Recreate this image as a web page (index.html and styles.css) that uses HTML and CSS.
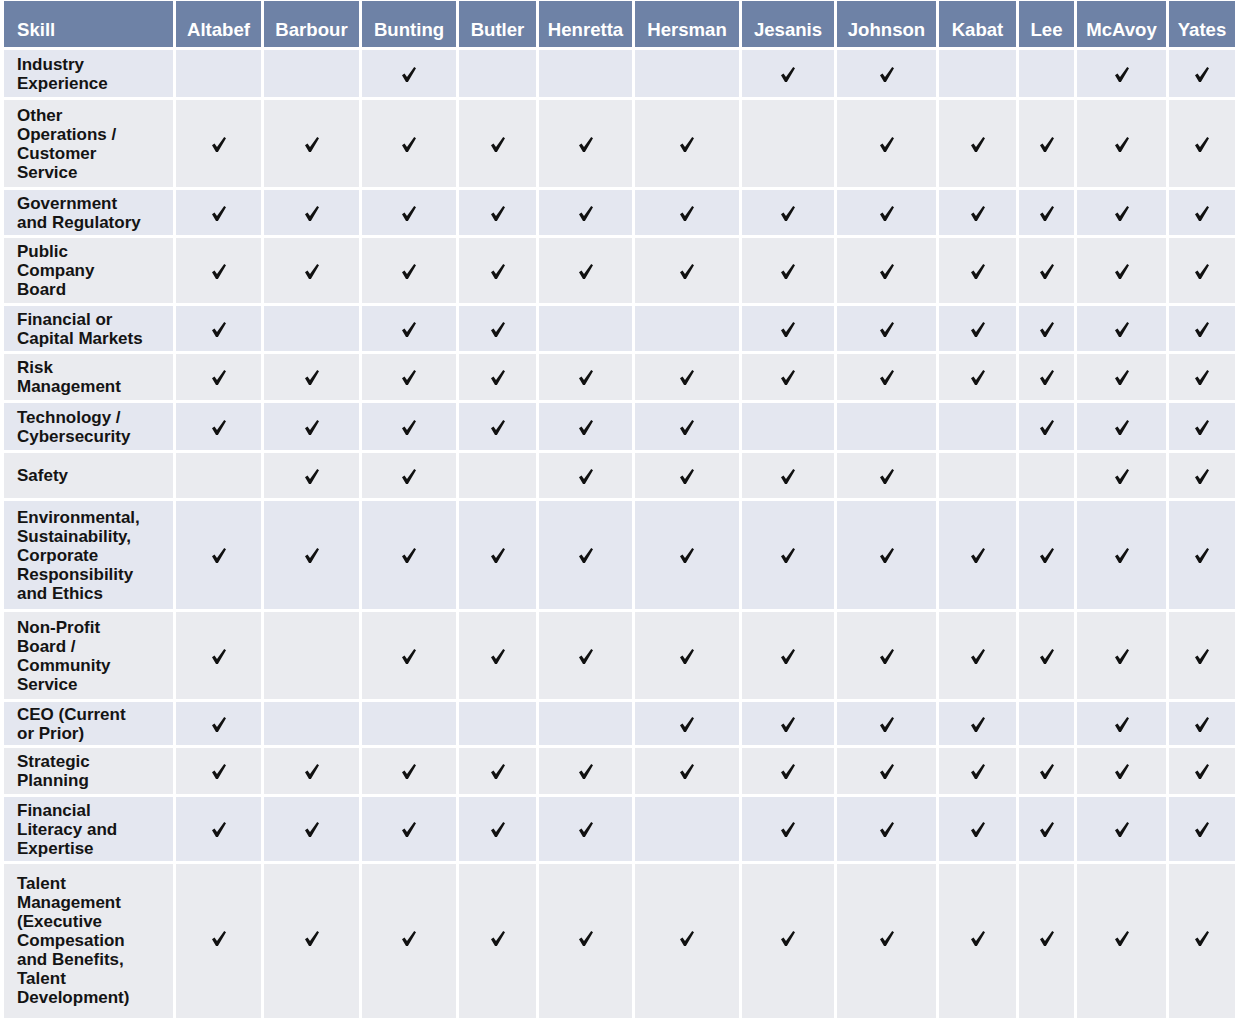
FILE: index.html
```html
<!DOCTYPE html>
<html lang="en">
<head>
<meta charset="utf-8">
<title>Director Skills Matrix</title>
<link rel="stylesheet" href="styles.css">
</head>
<body>
<svg class="defs" width="0" height="0" aria-hidden="true">
  <symbol id="ck" viewBox="0 0 14 15">
    <path d="M0 8.3 L2.5 6.6 L5 10.1 L12.2 0 L14 1.3 L5.9 15 L4 15 Z"/>
  </symbol>
</svg>
<table class="matrix">
  <colgroup>
    <col class="w-skill"><col class="w85"><col class="w95"><col class="w94"><col class="w77"><col class="w93"><col class="w104"><col class="w92"><col class="w99"><col class="w77"><col class="w55"><col class="w89"><col class="w66">
  </colgroup>
  <thead>
    <tr>
      <th class="hd hd-skill">Skill</th>
      <th class="hd">Altabef</th>
      <th class="hd">Barbour</th>
      <th class="hd">Bunting</th>
      <th class="hd">Butler</th>
      <th class="hd">Henretta</th>
      <th class="hd">Hersman</th>
      <th class="hd">Jesanis</th>
      <th class="hd">Johnson</th>
      <th class="hd">Kabat</th>
      <th class="hd">Lee</th>
      <th class="hd">McAvoy</th>
      <th class="hd">Yates</th>
    </tr>
  </thead>
  <tbody id="rows"></tbody>
</table>
<script src="app.js"></script>
</body>
</html>
```

FILE: app.js
```js
var data = [
  ["Industry<br>Experience", "p45", "001000110011"],
  ["Other<br>Operations /<br>Customer<br>Service", "p55", "111111011111"],
  ["Government<br>and Regulatory", "", "111111111111"],
  ["Public<br>Company<br>Board", "p40", "111111111111"],
  ["Financial or<br>Capital Markets", "", "101100111111"],
  ["Risk<br>Management", "p40", "111111111111"],
  ["Technology /<br>Cybersecurity", "p45", "111111000111"],
  ["Safety", "", "011011110011"],
  ["Environmental,<br>Sustainability,<br>Corporate<br>Responsibility<br>and Ethics", "p65", "111111111111"],
  ["Non-Profit<br>Board /<br>Community<br>Service", "p55", "101111111111"],
  ["CEO (Current<br>or Prior)", "p25", "100001111011"],
  ["Strategic<br>Planning", "p40", "111111111111"],
  ["Financial<br>Literacy and<br>Expertise", "", "111110111111"],
  ["Talent<br>Management<br>(Executive<br>Compesation<br>and Benefits,<br>Talent<br>Development)", "p-last", "111111111111"]
];
var tbody = document.getElementById("rows");
var html = "";
data.forEach(function (r) {
  html += '<tr class="' + r[1] + '"><th class="skill">' + r[0] + '</th>';
  for (var i = 0; i < r[2].length; i++) {
    html += '<td class="cell">' + (r[2][i] === "1" ? '<svg class="ck" width="14" height="15"><use href="#ck"/></svg>' : '') + '</td>';
  }
  html += '</tr>';
});
tbody.innerHTML = html;
```

FILE: styles.css
```css
html, body {
  margin: 0;
  padding: 0;
  background: #ffffff;
}
body {
  font-family: "Liberation Sans", Arial, sans-serif;
  color: #141414;
}
.defs {
  position: absolute;
  width: 0;
  height: 0;
  overflow: hidden;
}
.matrix {
  table-layout: fixed;
  border-collapse: separate;
  border-spacing: 3px;
  width: 1234px;
  margin: -2px 0 0 1px;
}
.w-skill { width: 169px; }
.w85 { width: 85px; }
.w95 { width: 95px; }
.w94 { width: 94px; }
.w77 { width: 77px; }
.w93 { width: 93px; }
.w104 { width: 104px; }
.w92 { width: 92px; }
.w99 { width: 99px; }
.w55 { width: 55px; }
.w89 { width: 89px; }
.w66 { width: 66px; }

.hd {
  background: #6e82a6;
  color: #ffffff;
  font-weight: bold;
  font-size: 18.6px;
  line-height: 22px;
  height: 34px;
  padding: 12px 0 0 0;
  text-align: center;
  vertical-align: middle;
  white-space: nowrap;
}
.hd-skill {
  text-align: left;
  padding-left: 13px;
}
.skill, .cell {
  background: #eaebef;
  vertical-align: middle;
  padding-top: 3.5px;
  padding-bottom: 3.5px;
  height: 38px;
}
tbody tr:nth-child(odd) .skill,
tbody tr:nth-child(odd) .cell {
  background: #e4e7f0;
}
.skill {
  text-align: left;
  font-weight: bold;
  font-size: 17px;
  line-height: 19px;
  padding-left: 13px;
  padding-right: 4px;
  white-space: nowrap;
}
.cell {
  text-align: center;
  padding-left: 0;
  padding-right: 0;
}
.p25 .skill, .p25 .cell { padding-top: 2.5px; padding-bottom: 2.5px; }
.p40 .skill, .p40 .cell { padding-top: 4px; padding-bottom: 4px; }
.p45 .skill, .p45 .cell { padding-top: 4.5px; padding-bottom: 4.5px; }
.p55 .skill, .p55 .cell { padding-top: 5.5px; padding-bottom: 5.5px; }
.p65 .skill, .p65 .cell { padding-top: 6.5px; padding-bottom: 6.5px; }
.p-last .skill {
  vertical-align: top;
  padding-top: 10px;
  padding-bottom: 14px;
}
.p-last .cell {
  vertical-align: top;
  padding-top: 65px;
  padding-bottom: 14px;
}
.ck {
  display: inline-block;
  vertical-align: middle;
  fill: #111111;
}
```
